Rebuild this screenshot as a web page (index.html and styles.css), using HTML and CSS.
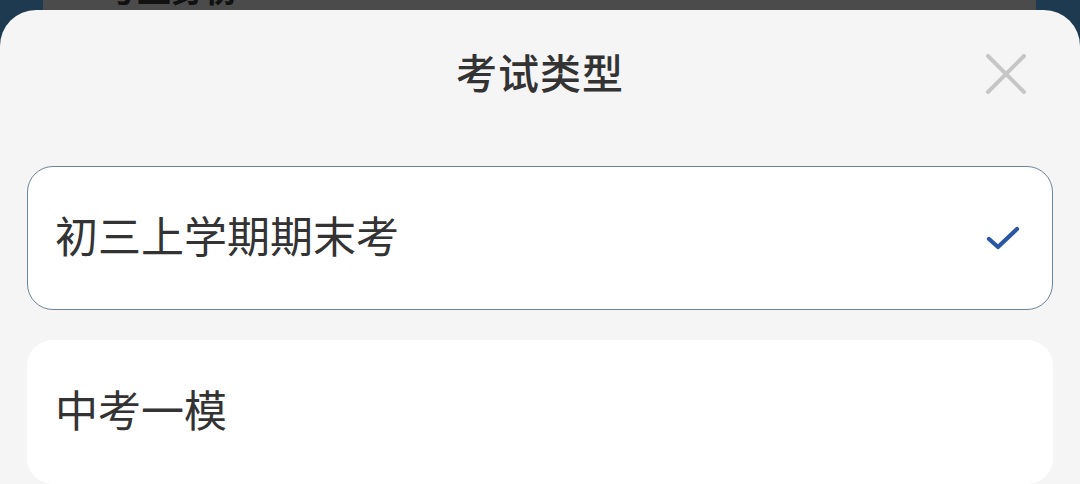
FILE: index.html
```html
<!DOCTYPE html>
<html lang="zh">

<head>
    <meta charset="utf-8">
    <meta name="viewport" content="width=device-width, initial-scale=1.0">
    <title>考试类型</title>
    <link rel="stylesheet" href="styles.css">
</head>

<body>

    <div class="bagside">
        <p>号上身份</p>
    </div>

    <section class="ark">
        <header class="top">
            <h1>考试类型</h1>
            <button class="luk" aria-label="关闭">
                <svg viewBox="0 0 40 40" width="40" height="40">
                    <path d="M2 2 L38 38 M38 2 L2 38" stroke="#c6c6c6" stroke-width="4" fill="none" stroke-linecap="round"/>
                </svg>
            </button>
        </header>

        <div class="liste">
            <div class="valg valgt">
                <span>初三上学期期末考</span>
                <svg class="flueben" viewBox="0 0 34 26" width="34" height="26">
                    <path d="M3 14 L12 22 L31 4" stroke="#2a56a6" stroke-width="4.2" fill="none" stroke-linecap="round" stroke-linejoin="round"/>
                </svg>
            </div>
            <div class="valg">
                <span>中考一模</span>
            </div>
        </div>
    </section>

</body></html>
```

FILE: styles.css
```css
html,
body {
    margin: 0;
    height: 100%;
    overflow: hidden;
}

body {
    background-color: #1e3a50;
    font-family: "Noto Sans CJK SC", "Noto Sans", sans-serif;
    color: #333333;
}

.bagside {
    height: 10px;
    margin: 0 44px 0 43px;
    background-color: #4b4b4b;
    overflow: hidden;
}

.bagside p {
    margin: -32px 0 0 60px;
    font-size: 34px;
    font-weight: bold;
    line-height: 40px;
    color: #111111;
}

.ark {
    background-color: #f5f5f5;
    border-radius: 36px 36px 0 0;
    height: 474px;
    box-sizing: border-box;
    padding: 0 27px;
}

.top {
    position: relative;
    height: 126px;
    display: flex;
    align-items: center;
    justify-content: center;
}

.top h1 {
    margin: 0 0 4px;
    font-size: 41px;
    font-weight: 500;
    letter-spacing: 1px;
    color: #333333;
}

.luk {
    position: absolute;
    right: 27px;
    top: 44px;
    padding: 0;
    border: none;
    background: none;
    width: 40px;
    height: 40px;
}

.luk svg {
    display: block;
}

.liste {
    padding-top: 30px;
    display: flex;
    flex-direction: column;
    gap: 30px;
}

.valg {
    height: 144px;
    box-sizing: border-box;
    background-color: #ffffff;
    border: 1px solid transparent;
    border-radius: 26px;
    display: flex;
    align-items: center;
    justify-content: space-between;
    padding: 0 32px 8px 27px;
    font-size: 43px;
    color: #333333;
}

.valgt {
    border-color: #6d8398;
}

.flueben {
    display: block;
    margin-top: 8px;
}
```
